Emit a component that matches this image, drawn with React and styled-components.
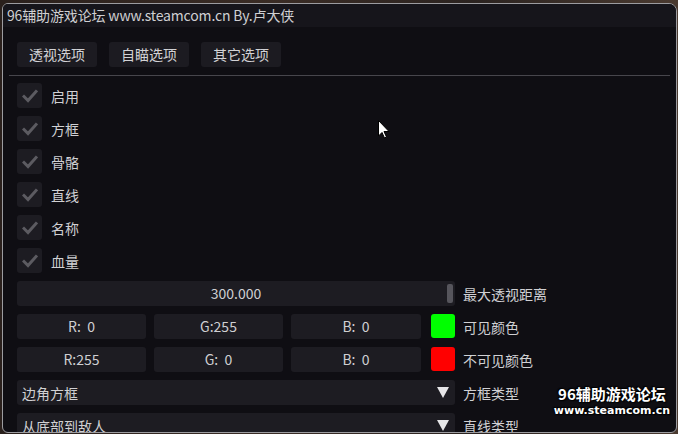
import React from "react";
import styled, { createGlobalStyle } from "styled-components";

const Global = createGlobalStyle`
  html, body { margin: 0; padding: 0; background: #1e1815; }
  body { font-family: "Noto Sans CJK SC", "Noto Sans", sans-serif; }
  * { box-sizing: border-box; }
`;

const Desk = styled.div`
  width: 678px;
  height: 434px;
  padding: 3px 1px 1px 2px;
  background: linear-gradient(90deg, #2a201c 0%, #3a2c25 40%, #2b2320 70%, #4a3a30 100%);
  overflow: hidden;
`;

const Window = styled.div`
  position: relative;
  width: 675px;
  height: 430px;
  border: 1px solid #9c9ca0;
  border-radius: 6px 8px 6px 6px;
  background: #0f0e13;
  overflow: hidden;
  display: flex;
  flex-direction: column;
`;

const TitleBar = styled.div`
  height: 23px;
  flex: none;
  background: #16151b;
  color: #cfcfd2;
  font-size: 14px;
  letter-spacing: -0.15px;
  line-height: 23px;
  padding-left: 4px;
  white-space: nowrap;
`;

const Body = styled.div`
  padding: 15px 6px 0 6px;
  display: flex;
  flex-direction: column;
`;

const Tabs = styled.div`
  display: flex;
  gap: 12px;
  padding-left: 8px;
`;

const Tab = styled.div`
  width: 80px;
  height: 25px;
  background: #1c1b21;
  border-radius: 3px;
  color: #d2d2d5;
  font-size: 14px;
  line-height: 25px;
  text-align: center;
`;

const Separator = styled.div`
  height: 1px;
  background: #47464c;
  margin: 8px 0 7px 0;
`;

const Rows = styled.div`
  display: flex;
  flex-direction: column;
  gap: 8px;
  padding-left: 8px;
`;

const Row = styled.div`
  display: flex;
  align-items: center;
  height: 25px;
  gap: 8px;
`;

const CheckBox = styled.div`
  width: 25px;
  height: 25px;
  border-radius: 3px;
  background: #1d1c22;
  display: flex;
  align-items: center;
  justify-content: center;
  margin-right: 1px;
`;

const Label = styled.span`
  color: #d0d0d3;
  font-size: 14px;
  white-space: nowrap;
`;

const Control = styled.div`
  width: 438px;
  height: 25px;
  display: flex;
  gap: 8px;
  flex: none;
`;

const Slider = styled.div`
  position: relative;
  flex: 1;
  background: #1d1c22;
  border-radius: 3px;
  color: #cfcfd2;
  font-size: 14px;
  line-height: 25px;
  text-align: center;
`;

const Grab = styled.div`
  position: absolute;
  right: 2px;
  top: 3px;
  width: 6px;
  height: 19px;
  border-radius: 2px;
  background: #56555c;
`;

const Field = styled.div`
  width: ${(p) => p.$w}px;
  flex: none;
  background: #1d1c22;
  border-radius: 3px;
  color: #cfcfd2;
  font-size: 14px;
  line-height: 25px;
  text-align: center;
  white-space: pre;
`;

const Swatch = styled.div`
  width: 24px;
  height: 24px;
  margin-left: 2px;
  border-radius: 3px;
  background: ${(p) => p.$c};
`;

const Combo = styled.div`
  flex: 1;
  display: flex;
  align-items: center;
  background: #1d1c22;
  border-radius: 3px;
  color: #d0d0d3;
  font-size: 14px;
  padding-left: 5px;
`;

const ComboText = styled.span`
  flex: 1;
  white-space: nowrap;
`;

const Arrow = styled.span`
  width: 25px;
  display: flex;
  justify-content: center;
`;

const Watermark = styled.div`
  position: absolute;
  right: 6px;
  bottom: 13px;
  display: flex;
  flex-direction: column;
  align-items: center;
  color: #ffffff;
  font-weight: 700;
  text-shadow: 0 0 2px #000, 1px 1px 1px #000, -1px -1px 1px #000;
  pointer-events: none;
`;

const WmTop = styled.div`
  font-size: 15px;
  line-height: 18px;
`;

const WmBottom = styled.div`
  font-family: "DejaVu Sans", "Noto Sans", sans-serif;
  font-size: 11px;
  line-height: 16px;
`;

const Cursor = styled.svg`
  position: absolute;
  left: 375px;
  top: 116px;
`;

const Check = () => (
  <svg width="16" height="14" viewBox="0 0 16 14">
    <path d="M2 7.5 L6 11.5 L14 2.5" fill="none" stroke="#5c5b61" strokeWidth="3" strokeLinecap="square" />
  </svg>
);

const DownArrow = () => (
  <svg width="12" height="11" viewBox="0 0 12 11">
    <path d="M0 0 L12 0 L6 11 Z" fill="#e6e6e8" />
  </svg>
);

const checks = ["启用", "方框", "骨骼", "直线", "名称", "血量"];

export default function App() {
  return (
    <Desk>
      <Global />
      <Window>
        <TitleBar>96辅助游戏论坛 www.steamcom.cn By.卢大侠</TitleBar>
        <Body>
          <Tabs>
            <Tab>透视选项</Tab>
            <Tab>自瞄选项</Tab>
            <Tab>其它选项</Tab>
          </Tabs>
          <Separator />
          <Rows>
            {checks.map((c) => (
              <Row key={c}>
                <CheckBox>
                  <Check />
                </CheckBox>
                <Label>{c}</Label>
              </Row>
            ))}
            <Row>
              <Control>
                <Slider>
                  300.000
                  <Grab />
                </Slider>
              </Control>
              <Label>最大透视距离</Label>
            </Row>
            <Row>
              <Control>
                <Field $w={129}>R:  0</Field>
                <Field $w={129}>G:255</Field>
                <Field $w={130}>B:  0</Field>
                <Swatch $c="#00ff00" />
              </Control>
              <Label>可见颜色</Label>
            </Row>
            <Row>
              <Control>
                <Field $w={129}>R:255</Field>
                <Field $w={129}>G:  0</Field>
                <Field $w={130}>B:  0</Field>
                <Swatch $c="#ff0000" />
              </Control>
              <Label>不可见颜色</Label>
            </Row>
            <Row>
              <Control>
                <Combo>
                  <ComboText>边角方框</ComboText>
                  <Arrow>
                    <DownArrow />
                  </Arrow>
                </Combo>
              </Control>
              <Label>方框类型</Label>
            </Row>
            <Row>
              <Control>
                <Combo>
                  <ComboText>从底部到敌人</ComboText>
                  <Arrow>
                    <DownArrow />
                  </Arrow>
                </Combo>
              </Control>
              <Label>直线类型</Label>
            </Row>
          </Rows>
        </Body>
        <Watermark>
          <WmTop>96辅助游戏论坛</WmTop>
          <WmBottom>www.steamcom.cn</WmBottom>
        </Watermark>
        <Cursor width="12" height="19" viewBox="0 0 12 19">
          <path d="M0.5 0.5 L0.5 16 L4 12.5 L6.5 18 L8.5 17 L6 11.5 L11 11.5 Z" fill="#ffffff" stroke="#000" strokeWidth="1" />
        </Cursor>
      </Window>
    </Desk>
  );
}
